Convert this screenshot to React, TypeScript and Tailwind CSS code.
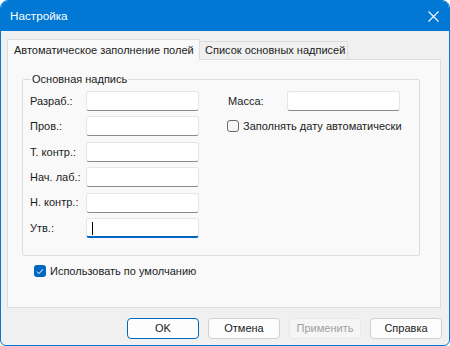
import React from "react";

const font = { fontFamily: '"Liberation Sans", Arial, sans-serif' };

const Field = ({ focused = false }: { focused?: boolean }) => (
  <div
    className={
      "relative h-[20px] rounded-[3px] border border-[#e5e5e5] bg-white " +
      (focused ? "border-b-2 border-b-[#0067c0]" : "border-b-[#8a8a8a]")
    }
  >
    {focused && <div className="absolute left-[5px] top-[3px] h-[13px] w-px bg-black" />}
  </div>
);

const Check = ({ checked = false, label }: { checked?: boolean; label: string }) => (
  <label className="flex items-center gap-[4px] whitespace-nowrap">
    {checked ? (
      <span className="flex h-[12px] w-[12px] items-center justify-center rounded-[3px] bg-[#0067c0]">
        <svg width="8" height="7" viewBox="0 0 8 7" fill="none">
          <path d="M1 3.6 L3 5.6 L7 1.2" stroke="white" strokeWidth="1" />
        </svg>
      </span>
    ) : (
      <span className="h-[12px] w-[12px] rounded-[3px] border border-[#6b6b6b] bg-[#f6f6f6]" />
    )}
    <span>{label}</span>
  </label>
);

const Button = ({
  children,
  primary = false,
  disabled = false
}: {
  children: React.ReactNode;
  primary?: boolean;
  disabled?: boolean;
}) => (
  <button
    disabled={disabled}
    className={
      "flex h-[21px] w-[72px] items-center justify-center rounded-[4px] border " +
      (disabled
        ? "border-[#e8e8e8] bg-[#f5f5f5] text-[#a0a0a0]"
        : primary
        ? "border-[#0067c0] bg-[#fdfdfd] text-[#1b1b1b]"
        : "border-[#d0d0d0] bg-[#fdfdfd] text-[#1b1b1b]")
    }
  >
    {children}
  </button>
);

const rows = ["Разраб.:", "Пров.:", "Т. контр.:", "Нач. лаб.:", "Н. контр.:", "Утв.:"];

export default function App() {
  return (
    <div
      style={font}
      className="flex h-[346px] w-[450px] flex-col overflow-hidden whitespace-nowrap rounded-t-[8px] rounded-b-[6px] border border-[#0078d4] bg-[#f0f0f0] text-[11px] text-[#1b1b1b]"
    >
      {/* title bar */}
      <div className="flex h-[30px] shrink-0 items-center justify-between bg-[#0078d4] pl-[9px] pr-[9px] text-white">
        <span className="text-[11.7px]">Настройка</span>
        <svg width="11" height="11" viewBox="0 0 11 11" className="mr-[1px]">
          <path d="M0.5 0.5 L10.5 10.5 M10.5 0.5 L0.5 10.5" stroke="white" strokeWidth="1.1" />
        </svg>
      </div>

      <div className="flex flex-1 flex-col pl-[6px] pt-[7px]">
        {/* tabs */}
        <div className="flex h-[21px] items-end">
          <div className="relative z-10 -mb-px flex h-[21px] w-[193px] items-center border border-b-0 border-[#dcdcdc] bg-[#f9f9f9] pl-[6px]">
            Автоматическое заполнение полей
          </div>
          <div className="flex h-[18px] w-[148px] items-center border border-b-0 border-l-0 border-[#dcdcdc] bg-[#f0f0f0] pl-[5px]">
            Список основных надписей
          </div>
        </div>

        {/* panel */}
        <div className="flex h-[249px] w-[434px] flex-col border border-[#dcdcdc] bg-[#f9f9f9] pl-[14px] pt-[11px]">
          <fieldset className="h-[185px] w-[398px] rounded-[2px] border border-[#dcdcdc] pl-[7px]">
            <legend className="ml-[1px] px-[1px] leading-[16px]">Основная надпись</legend>
            <div className="mt-[4px] flex">
              <div className="grid w-[169px] grid-cols-[56px_113px] gap-y-[5.4px]">
                {rows.map((r, i) => (
                  <React.Fragment key={r}>
                    <div className="flex h-[20px] items-center">{r}</div>
                    <Field focused={i === rows.length - 1} />
                  </React.Fragment>
                ))}
              </div>
              <div className="ml-[29px] flex flex-col">
                <div className="grid grid-cols-[59px_113px]">
                  <div className="flex h-[20px] items-center">Масса:</div>
                  <Field />
                </div>
                <div className="ml-[-1px] mt-[7px]">
                  <Check label="Заполнять дату автоматически" />
                </div>
              </div>
            </div>
          </fieldset>
          <div className="ml-[12px] mt-[7px]">
            <Check checked label="Использовать по умолчанию" />
          </div>
        </div>

        {/* buttons */}
        <div className="mt-[10px] flex gap-[9px] pl-[120px]">
          <Button primary>OK</Button>
          <Button>Отмена</Button>
          <Button disabled>Применить</Button>
          <Button>Справка</Button>
        </div>
      </div>
    </div>
  );
}
